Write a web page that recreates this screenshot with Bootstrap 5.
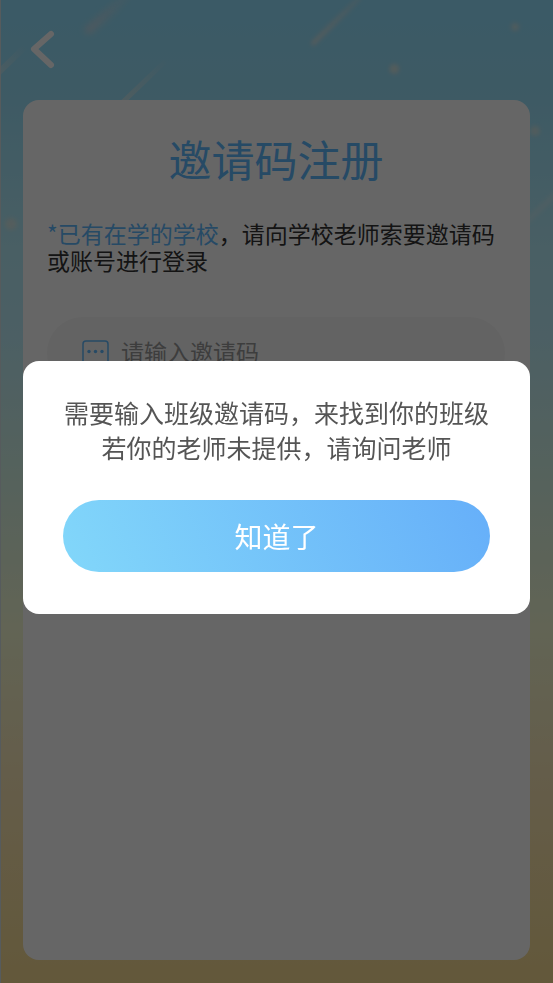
<!DOCTYPE html>
<html lang="zh-CN">
<head>
<meta charset="utf-8">
<meta name="viewport" content="width=device-width, initial-scale=1">
<title>邀请码注册</title>
<link href="https://cdn.jsdelivr.net/npm/bootstrap@5.3.0/dist/css/bootstrap.min.css" rel="stylesheet">
<style>
body {
  font-family: "Noto Sans CJK SC", "Noto Sans", sans-serif;
  color: #333;
}
.screen {
  border-left: 1px solid #d8e4e8;
  background: linear-gradient(180deg, #93e1ff 0%, #9be1fa 10%, #b6edfa 25%, #bdeefa 34%, #d6f5e6 49%, #f5fad4 64%, #fae8b8 79%, #f7dc92 100%);
}
.sky { height: 260px; pointer-events: none; }
.topbar { height: 100px; padding: 28px; }
.back-btn { line-height: 1; }
.panel { margin: 0 23px 23px 22px; padding: 28px 25px 30px 24px; border-radius: 16px; }
.panel-title { font-size: 43px; line-height: 60px; color: #60b8fd; }
.hint { font-size: 23px; line-height: 27px; margin: 32px 0 43px; }
.hint span { color: #60b8fd; }
.code-field { height: 72px; padding: 0 35px; background: #f7f7f7; gap: 12px; }
.code-field .form-control { font-size: 23px; line-height: 34px; color: #333; }
.code-field .form-control::placeholder { color: #999; opacity: 1; }
.shade { background: rgba(0, 0, 0, .6); padding: 0 23px 9px; }
.shade .modal-dialog { max-width: none; margin: 0; min-height: 100%; }
.notice { border-radius: 16px; }
.notice-body { padding: 34px 40px 42px; }
.notice-text { font-size: 25px; line-height: 35px; color: #555; margin: 0 -20px 35px; }
.ok-btn, .ok-btn:hover {
  height: 72px;
  font-size: 28px;
  color: #fff;
  background: linear-gradient(65deg, #82d7fa, #66aff9);
}
</style>
<script src="https://cdn.jsdelivr.net/npm/bootstrap@5.3.0/dist/js/bootstrap.bundle.min.js"></script>
</head>
<body>
<div class="screen position-relative min-vh-100 d-flex flex-column">
  <svg class="sky position-absolute top-0 start-0 w-100" viewBox="0 0 553 260" preserveAspectRatio="none" fill="none" stroke-linecap="round" aria-hidden="true">
    <defs>
      <filter id="soft" x="-50%" y="-50%" width="200%" height="200%" color-interpolation-filters="sRGB"><feGaussianBlur stdDeviation="2"/></filter>
      <filter id="softer" x="-50%" y="-50%" width="200%" height="200%" color-interpolation-filters="sRGB"><feGaussianBlur stdDeviation="3"/></filter>
      <linearGradient id="ray1" gradientUnits="userSpaceOnUse" x1="88" y1="30" x2="128" y2="-6"><stop stop-color="#dcdce4" stop-opacity=".6"/><stop offset="1" stop-color="#dcdce4" stop-opacity=".15"/></linearGradient>
      <linearGradient id="ray2" gradientUnits="userSpaceOnUse" x1="118" y1="106" x2="167" y2="59"><stop stop-color="#e4eae4" stop-opacity=".6"/><stop offset="1" stop-color="#e4eae4" stop-opacity="0"/></linearGradient>
      <linearGradient id="ray3" gradientUnits="userSpaceOnUse" x1="313" y1="43" x2="359" y2="-2"><stop stop-color="#e4e6e0" stop-opacity=".75"/><stop offset="1" stop-color="#e4e6e0" stop-opacity=".3"/></linearGradient>
      <linearGradient id="ray4" gradientUnits="userSpaceOnUse" x1="0" y1="70" x2="24" y2="47"><stop stop-color="#dceaea" stop-opacity=".45"/><stop offset="1" stop-color="#dceaea" stop-opacity="0"/></linearGradient>
    </defs>
    <path d="M88 30L128-6" stroke="url(#ray1)" stroke-width="9" filter="url(#softer)"/>
    <path d="M118 106L167 59" stroke="url(#ray2)" stroke-width="5"/>
    <path d="M313 43L359-2" stroke="url(#ray3)" stroke-width="5" filter="url(#soft)"/>
    <path d="M-2 72L24 47" stroke="url(#ray4)" stroke-width="6"/>
    <path d="M526 222L556 194" stroke="#e4f2f2" stroke-opacity=".35" stroke-width="6" filter="url(#soft)"/>
    <g fill="#e8e8dc" filter="url(#soft)">
      <circle cx="394" cy="69" r="5" fill-opacity=".7"/>
      <circle cx="515" cy="27" r="4" fill-opacity=".6"/>
      <circle cx="535" cy="131" r="5" fill-opacity=".6"/>
      <circle cx="10" cy="224" r="6" fill-opacity=".6"/>
    </g>
  </svg>

  <header class="topbar position-relative">
    <button type="button" class="back-btn btn p-0 border-0 d-block" aria-label="返回">
      <svg width="28" height="42" viewBox="0 0 28 42" fill="none" stroke="#fff" stroke-width="6" stroke-linecap="round" stroke-linejoin="round" aria-hidden="true"><path d="M22 6L5 21L22 37"/></svg>
    </button>
  </header>

  <main class="panel position-relative bg-white flex-grow-1">
    <h1 class="panel-title text-center fw-normal m-0">邀请码注册</h1>
    <p class="hint"><span>*已有在学的学校</span>，请向学校老师索要邀请码或账号进行登录</p>
    <div class="code-field d-flex align-items-center rounded-pill">
      <label for="code" class="d-flex" aria-label="邀请码">
        <svg width="27" height="27" viewBox="0 0 27 27" aria-hidden="true"><rect x="1" y="1" width="25" height="24" rx="3" fill="none" stroke="#60b8fd" stroke-width="1.500"/><g fill="#60b8fd"><circle cx="7" cy="11.500" r="1.700"/><circle cx="13.500" cy="11.500" r="1.700"/><circle cx="20" cy="11.500" r="1.700"/></g></svg>
      </label>
      <input id="code" type="text" class="form-control border-0 bg-transparent shadow-none p-0 pb-1" placeholder="请输入邀请码">
    </div>
  </main>
</div>

<div class="shade modal d-block" role="dialog" aria-modal="true" aria-labelledby="notice-text">
  <div class="modal-dialog modal-dialog-centered">
    <div class="notice modal-content border-0">
      <div class="notice-body text-center">
        <p id="notice-text" class="notice-text">需要输入班级邀请码，来找到你的班级<br>若你的老师未提供，请询问老师</p>
        <button type="button" class="ok-btn btn border-0 rounded-pill w-100 p-0">知道了</button>
      </div>
    </div>
  </div>
</div>
</body>
</html>
